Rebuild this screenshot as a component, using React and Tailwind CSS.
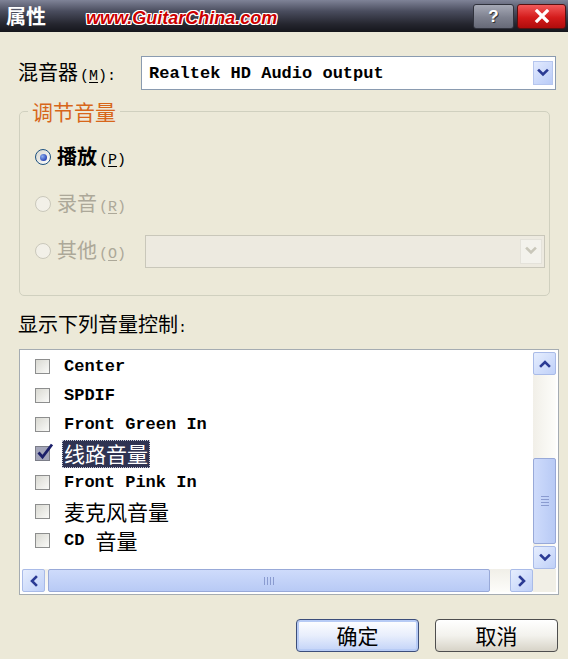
import React from "react";

const CJK = "font-['Noto_Sans_CJK_SC','Liberation_Sans',sans-serif]";
const MONO = "font-['Liberation_Mono','Noto_Sans_CJK_SC',monospace]";

function Chevron({ dir = "down", size = 12, color = "#2a3a94", sw = 2.6 }) {
  const paths = {
    down: "M2 3.5 L6 7.5 L10 3.5",
    up: "M2 8 L6 4 L10 8",
    left: "M8 2 L4 6 L8 10",
    right: "M4 2 L8 6 L4 10",
  };
  return (
    <svg width={size} height={size} viewBox="0 0 12 12">
      <path d={paths[dir]} fill="none" stroke={color} strokeWidth={sw} strokeLinecap="square" />
    </svg>
  );
}

function ScrollBtn({ dir }) {
  return (
    <div className="w-[23px] h-[23px] shrink-0 flex items-center justify-center rounded-[2px] border border-[#A9BBE8] bg-[linear-gradient(135deg,#E6EEFE,#BFD0F8)]">
      <Chevron dir={dir} size={12} />
    </div>
  );
}

function Label({ text, ch, colon, bold, size = "text-[20px]" }) {
  return (
    <span className="flex items-baseline leading-none">
      <span className={`${CJK} ${size} ${bold ? "font-bold" : ""}`}>{text}</span>
      <span className={`${MONO} text-[15px] ml-[2px]`}>
        (<span className="underline underline-offset-2">{ch}</span>)
      </span>
      {colon && <span className={`${MONO} text-[15px]`}>:</span>}
    </span>
  );
}

function Radio({ checked, disabled }) {
  if (checked) {
    return (
      <div className="w-[16px] h-[16px] shrink-0 rounded-full border border-[#1C5180] bg-[linear-gradient(135deg,#D6D6CE,#FFFFFF)] flex items-center justify-center">
        <div className="w-[7px] h-[7px] rounded-full bg-[radial-gradient(circle_at_35%_35%,#8FB0F0,#2B48B8_70%)]" />
      </div>
    );
  }
  return (
    <div
      className={`w-[16px] h-[16px] shrink-0 rounded-full border ${
        disabled ? "border-[#CAC8BB] bg-[#F2F0E8]" : "border-[#1C5180] bg-white"
      }`}
    />
  );
}

function Checkbox({ checked }) {
  if (checked) {
    return (
      <div className="relative w-[15px] h-[15px] shrink-0 border border-[#7C7E88] bg-[#A4A6BA]">
        <svg className="absolute left-[0px] top-[-5px]" width="18" height="19" viewBox="0 0 18 19">
          <path d="M2.5 10.5 L6.5 15 L16 2.5" fill="none" stroke="#1B1F6A" strokeWidth="2.8" />
        </svg>
      </div>
    );
  }
  return (
    <div className="w-[15px] h-[15px] shrink-0 border border-[#8D8E8E] bg-[linear-gradient(135deg,#D9D9D2,#FAFAF8)]" />
  );
}

function ListRow({ label, cjk, checked, selected }) {
  return (
    <div className="h-[29px] shrink-0 flex items-center pl-[13px]">
      <Checkbox checked={checked} />
      {selected ? (
        <span
          className={`ml-[12px] h-[28px] px-[2px] flex items-center bg-[#2F3352] text-white text-[21px] leading-none outline-1 outline-dotted outline-[#C9CBD8] -outline-offset-1 ${CJK}`}
        >
          {label}
        </span>
      ) : (
        <span
          className={`ml-[14px] text-black leading-none ${
            cjk ? `${CJK} text-[21px]` : `${MONO} text-[17px] font-bold`
          }`}
        >
          {label}
        </span>
      )}
    </div>
  );
}

export default function App() {
  const items = [
    { label: "Center" },
    { label: "SPDIF" },
    { label: "Front Green In" },
    { label: "线路音量", cjk: true, checked: true, selected: true },
    { label: "Front Pink In" },
    { label: "麦克风音量", cjk: true },
    { label: "CD 音量", cjk: true, mixed: true },
  ];

  return (
    <div className="w-[568px] h-[659px] overflow-hidden flex flex-col bg-[#ECE9D8]">
      {/* Title bar */}
      <div className="h-[32px] shrink-0 flex items-center bg-[linear-gradient(180deg,#7F8397_0%,#4A4D5E_35%,#25262F_75%,#15161C_100%)]">
        <span className={`pl-[6px] text-white font-bold text-[20px] leading-none ${CJK}`}>属性</span>
        <span className="ml-[40px] mt-[4px] text-[18px] font-bold italic text-[#CC0000] leading-none font-['Liberation_Sans',sans-serif] [text-shadow:-1px_-1px_0_#fff,1px_-1px_0_#fff,-1px_1px_0_#fff,1px_1px_0_#fff,0_1px_0_#fff,0_-1px_0_#fff,1px_0_0_#fff,-1px_0_0_#fff]">
          www.GuitarChina.com
        </span>
        <div className="ml-auto mr-[2px] flex items-center gap-[3px]">
          <div className="w-[41px] h-[25px] rounded-[3px] border border-[#30323C] bg-[linear-gradient(180deg,#A6A9B6,#7D808E_55%,#666977)] flex items-center justify-center text-white font-bold text-[17px] leading-none font-['Liberation_Sans',sans-serif] [text-shadow:1px_1px_0_#333]">
            ?
          </div>
          <div className="w-[49px] h-[25px] rounded-[3px] border border-[#5A1010] bg-[linear-gradient(180deg,#F25A5A,#D41B1B_55%,#B00C0C)] flex items-center justify-center">
            <svg width="16" height="14" viewBox="0 0 16 14">
              <path d="M3 2 L13 12 M13 2 L3 12" stroke="#fff" strokeWidth="3.2" strokeLinecap="square" />
            </svg>
          </div>
        </div>
      </div>

      {/* Body */}
      <div className="flex-1 flex flex-col text-black">
        {/* Mixer row */}
        <div className="mt-[24px] flex items-center pl-[18px]">
          <div className="w-[123px] shrink-0 flex items-center">
            <Label text="混音器" ch="M" colon />
          </div>
          <div className="w-[415px] h-[34px] border border-[#8A9BB0] bg-white flex items-center">
            <span className={`${MONO} text-[17px] font-bold pl-[7px] leading-none`}>Realtek HD Audio output</span>
            <div className="ml-auto mr-[2px] w-[20px] h-[24px] border border-[#B6C6EE] bg-[linear-gradient(135deg,#E2EAFE,#B9CBF7)] flex items-center justify-center">
              <Chevron dir="down" size={12} />
            </div>
          </div>
        </div>

        {/* Group box */}
        <fieldset className="mt-[8px] ml-[19px] w-[531px] border border-[#D0D0BF] rounded-[5px] p-0 m-0">
          <legend className={`ml-[8px] px-[4px] text-[21px] leading-[26px] text-[#D7661A] ${CJK}`}>调节音量</legend>
          <div className="mt-[16px] pb-[27px] pl-[15px] flex flex-col gap-[13px]">
            <div className="h-[34px] flex items-center">
              <Radio checked />
              <span className="ml-[6px]">
                <Label text="播放" ch="P" bold />
              </span>
            </div>
            <div className="h-[34px] flex items-center text-[#ACA899]">
              <Radio disabled />
              <span className="ml-[6px]">
                <Label text="录音" ch="R" />
              </span>
            </div>
            <div className="h-[34px] flex items-center text-[#ACA899]">
              <Radio disabled />
              <div className="ml-[6px] w-[88px] flex items-center">
                <Label text="其他" ch="O" />
              </div>
              <div className="w-[400px] h-[33px] border border-[#C9C7BA] bg-[#EDEAE0] flex items-center">
                <div className="ml-auto mr-[2px] w-[22px] h-[25px] border border-[#E4E2DA] bg-[#F3F2EC] flex items-center justify-center">
                  <Chevron dir="down" size={12} color="#C9C7BA" />
                </div>
              </div>
            </div>
          </div>
        </fieldset>

        {/* List label */}
        <div className="mt-[17px] pl-[18px] h-[24px] flex items-center">
          <span className="flex items-baseline leading-none">
            <span className={`${CJK} text-[20px]`}>显示下列音量控制</span>
            <span className={`${MONO} text-[15px]`}>:</span>
          </span>
        </div>

        {/* List box */}
        <div className="mt-[12px] ml-[19px] w-[540px] h-[246px] border border-[#A5ACB2] bg-white p-[2px] grid grid-cols-[1fr_23px] grid-rows-[1fr_23px]">
          <div className="overflow-hidden flex flex-col">
            {items.map((it) =>
              it.mixed ? (
                <div key={it.label} className="h-[29px] shrink-0 flex items-center pl-[13px]">
                  <Checkbox />
                  <span className={`ml-[14px] ${MONO} text-[17px] font-bold leading-none`}>CD</span>
                  <span className={`ml-[11px] ${CJK} text-[21px] leading-none`}>音量</span>
                </div>
              ) : (
                <ListRow key={it.label} {...it} />
              )
            )}
          </div>

          {/* Vertical scrollbar */}
          <div className="flex flex-col bg-[linear-gradient(90deg,#F1EFE8,#FDFDFA)]">
            <ScrollBtn dir="up" />
            <div className="flex-1 flex flex-col justify-end pb-[2px]">
              <div className="h-[86px] rounded-[2px] border border-[#98A9D8] bg-[linear-gradient(90deg,#CEDBFB,#B8CAF5)] flex flex-col items-center justify-center gap-[2px]">
                <div className="w-[8px] h-[1px] bg-[#8A9BD0]" />
                <div className="w-[8px] h-[1px] bg-[#8A9BD0]" />
                <div className="w-[8px] h-[1px] bg-[#8A9BD0]" />
                <div className="w-[8px] h-[1px] bg-[#8A9BD0]" />
              </div>
            </div>
            <ScrollBtn dir="down" />
          </div>

          {/* Horizontal scrollbar */}
          <div className="flex items-center bg-[linear-gradient(180deg,#F1EFE8,#FDFDFA)]">
            <ScrollBtn dir="left" />
            <div className="flex-1 h-full flex items-center">
              <div className="ml-[3px] w-[442px] h-[23px] rounded-[2px] border border-[#98A9D8] bg-[linear-gradient(180deg,#CEDBFB,#B8CAF5)] flex items-center justify-center gap-[2px]">
                <div className="w-[1px] h-[8px] bg-[#8A9BD0]" />
                <div className="w-[1px] h-[8px] bg-[#8A9BD0]" />
                <div className="w-[1px] h-[8px] bg-[#8A9BD0]" />
                <div className="w-[1px] h-[8px] bg-[#8A9BD0]" />
              </div>
            </div>
            <ScrollBtn dir="right" />
          </div>
          <div className="bg-[#F1EFE6]" />
        </div>

        {/* Buttons */}
        <div className="mt-[24px] flex justify-end gap-[16px] pr-[10px]">
          <button className={`w-[123px] h-[33px] rounded-[4px] border border-[#3C4E7A] bg-[linear-gradient(180deg,#FFFFFF,#E8EEFC_50%,#C2D3F8)] shadow-[inset_0_0_0_2px_#B7CBF5] text-[21px] leading-none ${CJK}`}>
            确定
          </button>
          <button className={`w-[123px] h-[33px] rounded-[4px] border border-[#4E4E4E] bg-[linear-gradient(180deg,#FFFFFF,#F3F2ED_50%,#D7D3C7)] text-[21px] leading-none ${CJK}`}>
            取消
          </button>
        </div>
      </div>
    </div>
  );
}
